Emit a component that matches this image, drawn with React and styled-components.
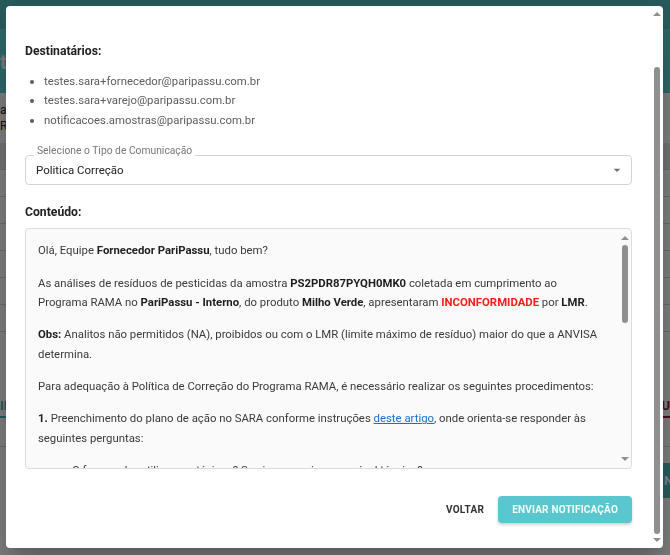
import React, { useLayoutEffect, useRef } from "react";
import styled, { createGlobalStyle } from "styled-components";

const GlobalStyle = createGlobalStyle`
  html, body { margin: 0; padding: 0; }
  body {
    width: 670px;
    height: 555px;
    overflow: hidden;
    font-family: Roboto, "Noto Sans", "Liberation Sans", Arial, sans-serif;
  }
  * { box-sizing: border-box; }
`;

/* ---------- background page ---------- */
const Page = styled.div`
  width: 670px;
  height: 555px;
  overflow: hidden;
  background: #f6f6f6;
  display: flex;
  flex-direction: column;
`;
const AppBar = styled.div`
  height: 31px;
  flex-shrink: 0;
  background: #50b3b5;
  border-bottom: 2px solid #62c9cb;
`;
const TitleBand = styled.div`
  height: 62px;
  flex-shrink: 0;
  background: #5bcbcd;
  display: flex;
  align-items: center;
  color: #e9f7f7;
  font-size: 20px;
  font-weight: 700;
`;
const FilterBar = styled.div`
  height: 50px;
  flex-shrink: 0;
  display: flex;
  flex-direction: column;
  justify-content: center;
  gap: 2px;
  font-size: 12px;
  color: #222;
`;
const Table = styled.div`
  display: flex;
  flex-direction: column;
`;
const TableRow = styled.div`
  height: 27px;
  flex-shrink: 0;
  border-bottom: 1px solid #d0d0d0;
  background: ${(p) => (p.$head ? "#dedede" : "transparent")};
`;
const Tabs = styled.div`
  margin-top: 66px;
  height: 49px;
  flex-shrink: 0;
  display: flex;
  justify-content: space-between;
  align-items: flex-start;
  border-bottom: 1px solid #d0d0d0;
`;
const Tab = styled.div`
  font-size: 13px;
  font-weight: 700;
  padding-bottom: 3px;
  color: ${(p) => p.$color};
  border-bottom: 2px solid ${(p) => p.$color};
`;
const PageActions = styled.div`
  margin-top: 16px;
  display: flex;
  justify-content: flex-end;
`;
const PageButton = styled.div`
  height: 35px;
  width: 90px;
  margin-right: -82px;
  background: #50b3b5;
  color: #fff;
  font-size: 13px;
  font-weight: 700;
  display: flex;
  align-items: center;
  padding-left: 2px;
`;

/* ---------- drawn scrollbar ---------- */
const ScrollbarRail = styled.div`
  position: absolute;
  top: 0;
  right: 0;
  bottom: 0;
  width: 12px;
  display: flex;
  flex-direction: column;
  align-items: center;
  pointer-events: none;
`;
const Arrow = styled.svg`
  flex-shrink: 0;
  display: block;
  margin-top: ${(p) => p.$mt || 0}px;
  margin-bottom: ${(p) => p.$mb || 0}px;
`;
const Thumb = styled.div`
  flex-shrink: 0;
  width: 6px;
  border-radius: 3px;
  background: #8f8f8f;
`;
const RailSpacer = styled.div`
  flex: 1;
`;

const Scrollbar = ({ inset, thumbTop, thumbHeight }) => (
  <ScrollbarRail>
    <Arrow width="8" height="4" viewBox="0 0 8 4" $mt={inset}>
      <path d="M0 4L4 0L8 4Z" fill="#8f8f8f" />
    </Arrow>
    <Thumb style={{ marginTop: thumbTop - inset - 4, height: thumbHeight }} />
    <RailSpacer />
    <Arrow width="8" height="4" viewBox="0 0 8 4" $mb={inset}>
      <path d="M0 0L8 0L4 4Z" fill="#8f8f8f" />
    </Arrow>
  </ScrollbarRail>
);

/* ---------- modal ---------- */
const Backdrop = styled.div`
  position: fixed;
  inset: 0;
  background: rgba(0, 0, 0, 0.5);
  display: flex;
  padding: 6px 7px 7px 6px;
`;
const DialogFrame = styled.div`
  position: relative;
  flex: 1;
  background: #fff;
  border-radius: 4px;
  overflow: hidden;
  box-shadow: 0 11px 15px -7px rgba(0, 0, 0, 0.2), 0 24px 38px 3px rgba(0, 0, 0, 0.14);
`;
const DialogScroll = styled.div`
  height: 100%;
  overflow-y: auto;
  scrollbar-width: none;
  padding-right: 12px;
`;
const DialogTitle = styled.div`
  height: 88px;
  padding: 14px 19px 0;
  font-size: 16px;
  font-weight: 500;
  color: #222;
`;
const Body = styled.div`
  padding: 0 19px 31px;
  display: flex;
  flex-direction: column;
`;
const SectionTitle = styled.div`
  font-size: 12.2px;
  font-weight: 700;
  line-height: 19.5px;
  color: #222;
  margin-top: ${(p) => p.$mt || 0}px;
`;
const EmailList = styled.ul`
  margin: 10px 0 0;
  padding-left: 19px;
  font-size: 11.35px;
  line-height: 19.5px;
  color: #5c5c5c;
`;
const SelectField = styled.div`
  position: relative;
  margin-top: 24.5px;
  height: 30px;
  border: 1px solid #d3d3d3;
  border-radius: 4px;
  display: flex;
  align-items: center;
  justify-content: space-between;
  padding: 0 6px 0 10px;
`;
const FloatingLabel = styled.span`
  position: absolute;
  left: 8px;
  top: -11px;
  padding: 0 3px;
  background: #fff;
  font-size: 10.3px;
  line-height: 12px;
  color: #777;
`;
const SelectValue = styled.span`
  font-size: 11.5px;
  color: #222;
`;
const ContentFrame = styled.div`
  position: relative;
  margin-top: 5.5px;
  height: 241px;
  flex-shrink: 0;
  border: 1px solid #dcdcdc;
  border-radius: 4px;
  background: #fafafa;
  overflow: hidden;
`;
const ContentScroll = styled.div`
  height: 100%;
  overflow-y: auto;
  scrollbar-width: none;
  padding: 0 24px 0 12px;
  font-size: 11.35px;
  line-height: 19.5px;
  color: #3a3a3a;
  p { margin: 12.8px 0; }
  b { color: #1e1e1e; font-weight: 700; }
`;
const Alert = styled.b`
  && { color: #ff1a1a; }
`;
const Link = styled.a`
  color: #1a6fd0;
  text-decoration: underline;
`;
const QuestionList = styled.ul`
  margin: 12.8px 0;
  padding-left: 34px;
`;
const Footer = styled.div`
  margin-top: 27px;
  display: flex;
  justify-content: flex-end;
  align-items: center;
  gap: 6px;
`;
const TextButton = styled.button`
  height: 27px;
  padding: 0 8px;
  border: none;
  background: none;
  font-family: inherit;
  font-size: 10px;
  font-weight: 700;
  letter-spacing: 0.3px;
  color: #333;
`;
const PrimaryButton = styled.button`
  height: 27px;
  padding: 0 14px;
  border: none;
  border-radius: 4px;
  background: #5ac7cf;
  color: #f4fcfd;
  font-family: inherit;
  font-size: 10px;
  font-weight: 700;
  letter-spacing: 0.2px;
  box-shadow: 0 2px 3px rgba(0, 0, 0, 0.18);
`;

const ArrowDown = () => (
  <svg width="16" height="16" viewBox="0 0 24 24" aria-hidden="true">
    <path d="M7 10l5 5 5-5z" fill="#6f6f6f" />
  </svg>
);

export default function App() {
  const dialogRef = useRef(null);
  useLayoutEffect(() => {
    if (dialogRef.current) dialogRef.current.scrollTop = 52;
  }, []);

  return (
    <>
      <GlobalStyle />
      <Page>
        <AppBar />
        <TitleBand>tatus</TitleBand>
        <FilterBar>
          <span>atualizado em</span>
          <span>RAMA</span>
        </FilterBar>
        <Table>
          <TableRow $head />
          <TableRow />
          <TableRow />
          <TableRow />
          <TableRow />
          <TableRow />
          <TableRow />
        </Table>
        <Tabs>
          <Tab $color="#3fb0b3">INFORMAÇÕES</Tab>
          <Tab $color="#8c1f2a">MENU</Tab>
        </Tabs>
        <PageActions>
          <PageButton>NOVO</PageButton>
        </PageActions>
      </Page>

      <Backdrop>
        <DialogFrame>
          <DialogScroll ref={dialogRef}>
            <DialogTitle>Enviar Notificação</DialogTitle>
            <Body>
              <SectionTitle>Destinatários:</SectionTitle>
              <EmailList>
                <li>testes.sara+fornecedor@paripassu.com.br</li>
                <li>testes.sara+varejo@paripassu.com.br</li>
                <li>notificacoes.amostras@paripassu.com.br</li>
              </EmailList>

              <SelectField>
                <FloatingLabel>Selecione o Tipo de Comunicação</FloatingLabel>
                <SelectValue>Politica Correção</SelectValue>
                <ArrowDown />
              </SelectField>

              <SectionTitle $mt={18}>Conteúdo:</SectionTitle>
              <ContentFrame>
                <ContentScroll>
                  <p>
                    Olá, Equipe <b>Fornecedor PariPassu</b>, tudo bem?
                  </p>
                  <p>
                    As análises de resíduos de pesticidas da amostra <b>PS2PDR87PYQH0MK0</b> coletada
                    em cumprimento ao Programa RAMA no <b>PariPassu - Interno</b>, do produto{" "}
                    <b>Milho Verde</b>, apresentaram <Alert>INCONFORMIDADE</Alert> por <b>LMR</b>.
                  </p>
                  <p>
                    <b>Obs:</b> Analitos não permitidos (NA), proibidos ou com o LMR (limite máximo
                    de resíduo) maior do que a ANVISA determina.
                  </p>
                  <p>
                    Para adequação à Política de Correção do Programa RAMA, é necessário realizar os
                    seguintes procedimentos:
                  </p>
                  <p>
                    <b>1.</b> Preenchimento do plano de ação no SARA conforme instruções{" "}
                    <Link href="#">deste artigo</Link>, onde orienta-se responder às seguintes
                    perguntas:
                  </p>
                  <QuestionList>
                    <li>O fornecedor utiliza agrotóxicos? Se sim, possui responsável técnico?</li>
                    <li>Quais produtos foram aplicados na cultura e em quais doses?</li>
                    <li>O período de carência dos produtos foi respeitado antes da colheita?</li>
                    <li>Há registro das aplicações em caderno de campo?</li>
                    <li>Quais ações corretivas serão adotadas para evitar novas ocorrências?</li>
                  </QuestionList>
                  <p>
                    <b>2.</b> Envio de nova amostra para análise após a implementação das ações
                    corretivas descritas no plano de ação.
                  </p>
                  <p>
                    <b>3.</b> Treinamento da equipe responsável pelas aplicações de defensivos
                    agrícolas.
                  </p>
                  <p>Em caso de dúvidas, entre em contato com a equipe do Programa RAMA.</p>
                  <p>Atenciosamente,</p>
                  <p>
                    <b>Equipe PariPassu</b>
                  </p>
                </ContentScroll>
                <Scrollbar inset={7} thumbTop={16} thumbHeight={78} />
              </ContentFrame>

              <Footer>
                <TextButton>VOLTAR</TextButton>
                <PrimaryButton>ENVIAR NOTIFICAÇÃO</PrimaryButton>
              </Footer>
            </Body>
          </DialogScroll>
          <Scrollbar inset={6} thumbTop={61} thumbHeight={467} />
        </DialogFrame>
      </Backdrop>
    </>
  );
}
